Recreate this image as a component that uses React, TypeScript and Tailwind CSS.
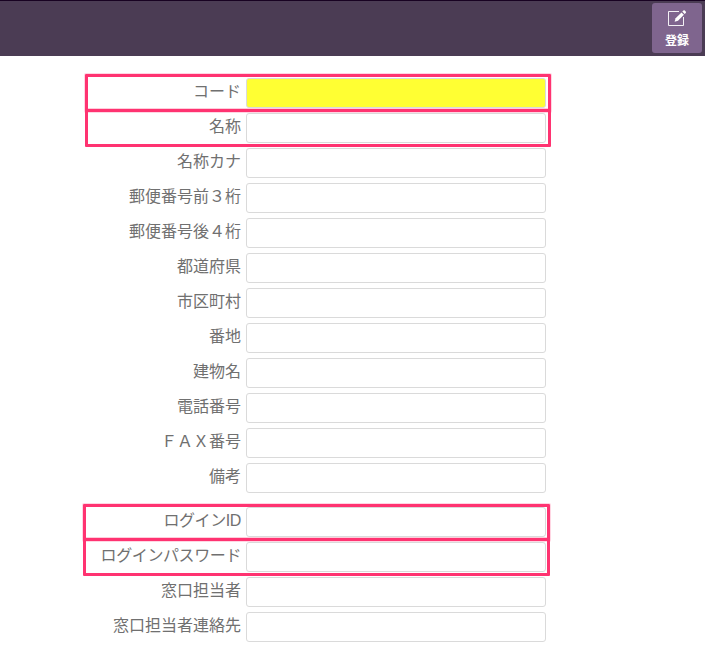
const basicFields = [
  'コード',
  '名称',
  '名称カナ',
  '郵便番号前３桁',
  '郵便番号後４桁',
  '都道府県',
  '市区町村',
  '番地',
  '建物名',
  '電話番号',
  'ＦＡＸ番号',
  '備考',
];

const loginFields = ['ログインID', 'ログインパスワード', '窓口担当者', '窓口担当者連絡先'];

function EditIcon() {
  return (
    <svg width="20" height="18" viewBox="0 0 20 18" fill="none" aria-hidden="true">
      <path d="M12 2.5H1.5V16.5H16.5V8" stroke="#fff" strokeOpacity="0.9" strokeWidth="1" />
      <path d="M7.6 12.7L8.6 9.3L14.5 3.4L16.9 5.8L11 11.7Z" fill="#fff" />
      <path d="M15.3 2.6L16.4 1.5Q17.1 .9 17.8 1.6L18.7 2.5Q19.4 3.2 18.7 3.9L17.7 5Z" fill="#fff" />
    </svg>
  );
}

function Field({ label, required = false }: { label: string; required?: boolean }) {
  return (
    <label className="flex h-[30px] gap-[5px]">
      <span
        className={`w-[241px] shrink-0 whitespace-nowrap text-right text-base leading-7 text-[#707070] ${
          label.startsWith('ログイン') ? 'tracking-[-0.4px]' : ''
        }`}
      >
        {label}
      </span>
      <input
        type="text"
        className={`h-[30px] w-[300px] rounded-[3px] border border-[#dadada] px-2 outline-none ${
          required ? 'bg-[#ffff33]' : 'bg-white'
        }`}
      />
    </label>
  );
}

export default function App() {
  return (
    <div className="relative h-[667px] w-[705px] overflow-hidden bg-white font-['Liberation_Sans','Noto_Sans_CJK_JP',sans-serif]">
      <header className="flex h-14 justify-end border-t border-[#180222] bg-[#4b3c54] pr-[3px] pt-[2px]">
        <button className="flex h-[50px] w-[50px] flex-col items-center rounded-[3px] bg-[#7f658e] pt-[6px] text-white">
          <EditIcon />
          <span className="mt-[6px] text-xs font-bold leading-4">登録</span>
        </button>
      </header>
      <form className="flex flex-col gap-[14px] pt-[22px]">
        <div className="flex flex-col gap-[5px]">
          {basicFields.map((label) => (
            <Field key={label} label={label} required={label === 'コード'} />
          ))}
        </div>
        <div className="flex flex-col gap-[5px]">
          {loginFields.map((label) => (
            <Field key={label} label={label} />
          ))}
        </div>
      </form>
      <div className="pointer-events-none absolute left-[85px] top-[74px] h-[38px] w-[466px] rounded-[1px] border-[3px] border-[#ff3371] shadow-[0_0_0_1px_#ff337133]" />
      <div className="pointer-events-none absolute left-[85px] top-[109px] h-[38px] w-[466px] rounded-[1px] border-[3px] border-[#ff3371] shadow-[0_-1px_0_0_#ff337140]" />
      <div className="pointer-events-none absolute left-[83px] top-[504px] h-[37px] w-[467px] rounded-[1px] border-[3px] border-[#ff3371] shadow-[0_0_0_1px_#ff337133]" />
      <div className="pointer-events-none absolute left-[83px] top-[538px] h-[38px] w-[467px] rounded-[1px] border-[3px] border-[#ff3371] shadow-[0_-1px_0_0_#ff337140]" />
    </div>
  );
}
